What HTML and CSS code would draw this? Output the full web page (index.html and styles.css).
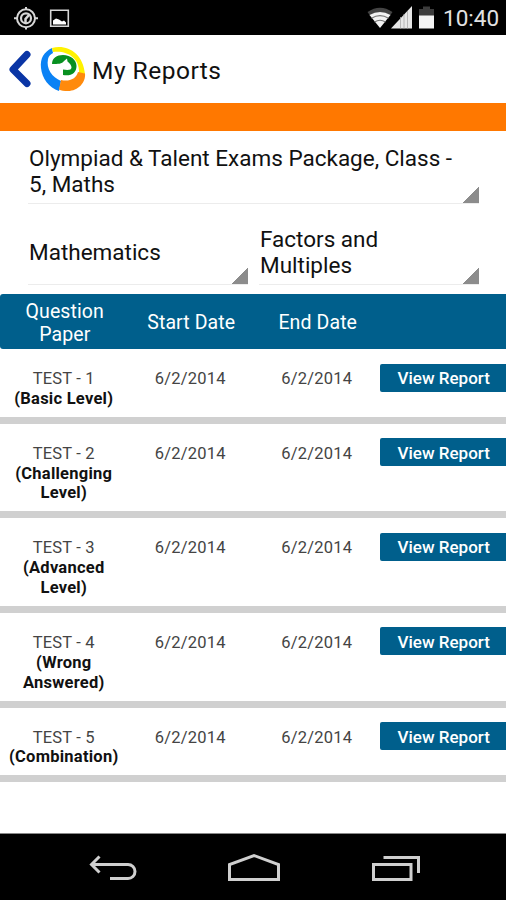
FILE: index.html
```
<!DOCTYPE html>
<html lang="en">
<head>
    <meta charset="UTF-8">
    <meta name="viewport" content="width=device-width, initial-scale=1.0">
    <title>My Reports</title>
    <link rel="stylesheet" href="styles.css">
</head>
<body>

<div class="status-bar">
    <svg class="status-left" width="60" height="35" viewBox="0 0 60 35">
        <g fill="none" stroke="#d6d6d6">
            <circle cx="16" cy="18.3" r="9" stroke-width="2"/>
            <path d="M4 18.3h3M25 18.3h3M16 7v2M16 27.5v2" stroke-width="2"/>
            <circle cx="16" cy="18.3" r="5" stroke-width="2.2"/>
            <path d="M15.5 23v-4l3.5-4" stroke-width="2.5"/>
            <path d="M40.7 10.2h17.6v16H40.7z" stroke-width="1.6"/>
        </g>
        <path d="M43 24.5v-4l3-2 3 1 3 2 2-1 2 2v2z" fill="#fff"/>
    </svg>
    <svg class="status-right" width="70" height="35" viewBox="0 0 70 35">
        <path d="M.5 12q12.5-8.500 25 0l-2.500 3.500q-10-6-20 0z" fill="#444"/>
        <path d="M2.5 15q10.5-6 21 0L13 28z" fill="#f2f2f2"/>
        <path d="M4.5 18.2q8.500-5 17 0M7.5 22q5.500-3.500 11 0" fill="none" stroke="#777" stroke-width="1.2"/>
        <path d="M24 28.5L45 6v22.5z" fill="#e6e6e6"/>
        <path d="M33.5 17v11.5M37 14v14.5M40.5 11v17.5" stroke="#aaa" stroke-width=".8"/>
        <path d="M52 16V9h4V6.5h7V9h4v7z" fill="#3c3c3c"/>
        <path d="M52 15.5h15v13H52z" fill="#f4f4f4"/>
    </svg>
    <span class="clock">10:40</span>
</div>

<div class="header">
    <svg class="back" width="24" height="40" viewBox="0 0 24 40">
        <path d="M20 5.5L6 20.5l14 14" fill="none" stroke="#0a35a5" stroke-width="7" stroke-linecap="round" stroke-linejoin="round"/>
    </svg>
    <svg class="logo" width="46" height="46" viewBox="0 0 46 46">
        <path d="M12 2C4 6 0 12 1 22c1 10 8 20 18 23l2-10C12 31 6 23 8 13c.5-3 3-5 5-6z" fill="#0b82f5"/>
        <path d="M12 2c15-4 31 5 33 26l-6-1C40 13 28 4 13 6z" fill="#fff200"/>
        <path d="M38 26l7 1.5c1 9-7 17.5-17 17.5-4 0-7-.5-9-1.5l2-9.500c8 2 15-1 17-8z" fill="#ff8a0c"/>
        <path d="M12 18c0-6 5-9 11-9 8 0 13.5 5 13.5 11 0 7-5.500 10.500-13.500 9v-5.500c5 1 8.500.5 8.500-2 0-2-1.500-4-4-6l-.5-3-3 2.500c-2 3-6 3-12 3z" fill="#089021"/>
    </svg>
    <h1 class="title">My Reports</h1>
</div>
<div class="accent"></div>

<div class="filters">
    <div class="spinner package">Olympiad &amp; Talent Exams Package, Class - 5, Maths</div>
    <div class="spinner subject">Mathematics</div>
    <div class="spinner chapter">Factors and<br>Multiples</div>
</div>

<div class="reports">
    <div class="row head">
        <div class="cell">Question<br>Paper</div>
        <div class="cell">Start Date</div>
        <div class="cell">End Date</div>
    </div>
    <div class="row">
        <div class="cell">TEST - 1<br><b>(Basic Level)</b></div>
        <div class="cell">6/2/2014</div>
        <div class="cell">6/2/2014</div>
        <button class="view">View Report</button>
    </div>
    <div class="row">
        <div class="cell">TEST - 2<br><b>(Challenging<br>Level)</b></div>
        <div class="cell">6/2/2014</div>
        <div class="cell">6/2/2014</div>
        <button class="view">View Report</button>
    </div>
    <div class="row">
        <div class="cell">TEST - 3<br><b>(Advanced<br>Level)</b></div>
        <div class="cell">6/2/2014</div>
        <div class="cell">6/2/2014</div>
        <button class="view">View Report</button>
    </div>
    <div class="row">
        <div class="cell">TEST - 4<br><b>(Wrong<br>Answered)</b></div>
        <div class="cell">6/2/2014</div>
        <div class="cell">6/2/2014</div>
        <button class="view">View Report</button>
    </div>
    <div class="row">
        <div class="cell">TEST - 5<br><b>(Combination)</b></div>
        <div class="cell">6/2/2014</div>
        <div class="cell">6/2/2014</div>
        <button class="view">View Report</button>
    </div>
</div>

<div class="nav-bar">
    <svg width="48" height="30" viewBox="0 0 48 30">
        <path d="M10.5 3.5L2.5 11.5l8 8M2.5 11.5H39a7 7 0 0 1 0 14H21" fill="none" stroke="#cfcfcf" stroke-width="3"/>
    </svg>
    <svg width="54" height="30" viewBox="0 0 54 30">
        <path d="M2.5 26.5V11.5L27 2.5l24.5 9v15z" fill="none" stroke="#cfcfcf" stroke-width="3"/>
    </svg>
    <svg width="50" height="30" viewBox="0 0 50 30">
        <path d="M2.5 11.5h37.5v15H2.5zM12.5 4.5h35V20" fill="none" stroke="#cfcfcf" stroke-width="3"/>
    </svg>
</div>

</body>
</html>
```
FILE: styles.css
```
body {
    margin: 0;
    height: 900px;
    display: flex;
    flex-direction: column;
    background: #fff;
    color: #111;
    font-family: Roboto, "Liberation Sans", sans-serif;
    overflow: hidden;
}

.status-bar {
    display: flex;
    align-items: center;
    height: 35px;
    padding: 0 8px 0 10px;
    background: #000;
    color: #e2e2e2;
}

.status-right {
    margin-left: auto;
}

.clock {
    width: 55px;
    margin-left: 6px;
    font-size: 22.5px;
    line-height: 35px;
    padding-top: 2px;
    white-space: nowrap;
}

.header {
    display: flex;
    align-items: center;
    height: 68px;
    padding-left: 7px;
}

.logo {
    margin-left: 9px;
}

.title {
    margin: 3px 0 0 6px;
    font-size: 24.5px;
    font-weight: 400;
    letter-spacing: 0.5px;
}

.accent {
    height: 28px;
    background: #ff7800;
}

/* dropdowns */
.filters {
    display: grid;
    grid-template-columns: 220px 220px;
    grid-template-rows: 73px 81px;
    column-gap: 11px;
    height: 163px;
    padding-left: 28px;
}

.spinner {
    display: flex;
    align-items: center;
    box-sizing: border-box;
    padding-left: 1px;
    border-bottom: 1px solid #ececec;
    background: linear-gradient(135deg, transparent 50%, #8c8c8c 50%) right bottom / 16px 16px no-repeat;
    font-size: 22.5px;
    line-height: 26.5px;
    letter-spacing: 0;
}

.package {
    grid-column: 1 / 3;
    padding-top: 8px;
    padding-right: 18px;
}

.subject {
    padding-top: 16px;
}

.chapter {
    padding-top: 16px;
}

/* report list */
.row {
    display: grid;
    grid-template-columns: repeat(3, 126.5px) 1fr;
    align-items: start;
    padding: 20px 0 8.2px;
    border-bottom: 7px solid #d0d0d0;
    font-size: 16.5px;
    line-height: 19.8px;
}

.cell {
    padding-left: 1px;
    text-align: center;
    color: #444;
    letter-spacing: 0.2px;
}

.cell b {
    color: #111;
    letter-spacing: 0.25px;
}

.head {
    align-items: center;
    box-sizing: border-box;
    height: 55px;
    padding: 2px 0 0 1px;
    border: 0;
    border-radius: 3px 0 0 3px;
    background: #005f8c;
    font-size: 19.5px;
    line-height: 23px;
}

.head .cell {
    color: #fff;
    letter-spacing: 0.1px;
}

.view {
    height: 28px;
    margin: -5.5px 0 0;
    padding: 1px 0 0 2px;
    border: 0;
    border-radius: 2px 0 0 2px;
    background: #005f8c;
    color: #fff;
    font: 500 17px Roboto, "Liberation Sans", sans-serif;
}

.nav-bar {
    display: flex;
    justify-content: space-between;
    align-items: center;
    box-sizing: border-box;
    height: 67px;
    margin-top: auto;
    padding: 2px 85px 0 89px;
    border-top: 1px solid #888;
    background: #000;
}
```
